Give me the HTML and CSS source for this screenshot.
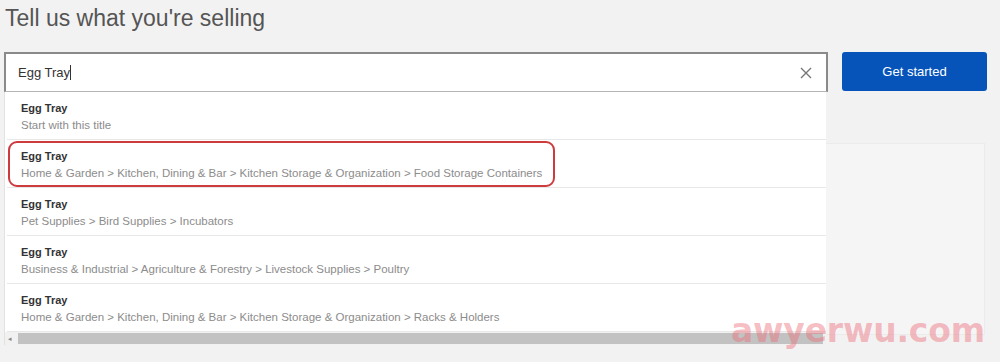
FILE: index.html
```html
<!DOCTYPE html>
<html lang="en">
<head>
  <meta charset="UTF-8" />
  <title>Tell us what you're selling</title>
  <link rel="stylesheet" href="styles.css">
</head>
<body>

  <div class="page">
    <h1>Tell us what you're selling</h1>

    <div class="sell-row">
      <div class="search-col">
        <div class="search-box">
          <span class="search-text">Egg Tray</span><span class="caret"></span>
          <svg class="clear-icon" width="12" height="12" viewBox="0 0 12 12">
            <path d="M1 1 L11 11 M11 1 L1 11" stroke="#777" stroke-width="1.4" fill="none" />
          </svg>
        </div>

        <!-- suggestions menu -->
        <div class="suggestions">
          <div class="suggestion">
            <div class="s-title">Egg Tray</div>
            <div class="s-path">Start with this title</div>
          </div>
          <div class="suggestion">
            <div class="s-title">Egg Tray</div>
            <div class="s-path">Home &amp; Garden &gt; Kitchen, Dining &amp; Bar &gt; Kitchen Storage &amp; Organization &gt; Food Storage Containers</div>
            <div class="highlight"></div>
          </div>
          <div class="suggestion">
            <div class="s-title">Egg Tray</div>
            <div class="s-path">Pet Supplies &gt; Bird Supplies &gt; Incubators</div>
          </div>
          <div class="suggestion">
            <div class="s-title">Egg Tray</div>
            <div class="s-path">Business &amp; Industrial &gt; Agriculture &amp; Forestry &gt; Livestock Supplies &gt; Poultry</div>
          </div>
          <div class="suggestion">
            <div class="s-title">Egg Tray</div>
            <div class="s-path">Home &amp; Garden &gt; Kitchen, Dining &amp; Bar &gt; Kitchen Storage &amp; Organization &gt; Racks &amp; Holders</div>
          </div>
          <div class="scrollbar">
            <span class="arrow">&#9666;</span>
            <div class="thumb"></div>
          </div>
        </div>
      </div>

      <div class="side-col">
        <button class="start-btn">Get started</button>
      </div>
    </div>

    <div class="info-card"></div>
  </div>

  <div class="watermark">awyerwu.com</div>

</body>
</html>
```

FILE: styles.css
```css
* {
  box-sizing: border-box;
  margin: 0;
  padding: 0;
}

body {
  font-family: 'Liberation Sans', Arial, sans-serif;
  background: #f2f2f2;
  width: 1000px;
  height: 362px;
  overflow: hidden;
  position: relative;
}

.page {
  padding: 4px 13px 0 4px;
}

h1 {
  font-size: 23px;
  font-weight: normal;
  line-height: 28px;
  color: #555;
  margin-left: 1px;
}

.sell-row {
  display: flex;
  gap: 14px;
  margin-top: 20px;
}

.search-col {
  width: 824px;
  position: relative;
  z-index: 2;
}

.search-box {
  height: 40px;
  background: #fff;
  border: 2px solid #8a8a8a;
  border-bottom: 1px solid #b5b5b5;
  display: flex;
  align-items: center;
  padding-left: 12px;
  padding-right: 14px;
}

.search-text {
  font-size: 13px;
  color: #333;
}

.caret {
  width: 1px;
  height: 15px;
  background: #333;
}

.clear-icon {
  margin-left: auto;
}

.suggestions {
  position: absolute;
  top: 40px;
  left: 0;
  width: 822px;
  background: #fff;
  border-left: 1px solid #e2e2e2;
}

.suggestion {
  position: relative;
  height: 48px;
  padding: 8px 0 0 14px;
  border-bottom: 1px solid #e8e8e8;
  margin-left: 2px;
}

.suggestion:last-of-type {
  border-bottom: none;
  height: 46px;
}

.s-title {
  font-size: 11px;
  font-weight: bold;
  color: #333;
  line-height: 17px;
}

.s-path {
  font-size: 11.5px;
  color: #8c8c8c;
  line-height: 17px;
}

.highlight {
  position: absolute;
  left: 1px;
  top: 1px;
  width: 547px;
  height: 46px;
  border: 2px solid #cf3a3f;
  border-radius: 9px;
}

.scrollbar {
  height: 13px;
  background: #f1f1f1;
  display: flex;
  align-items: center;
  padding-left: 3px;
}

.arrow {
  font-size: 7px;
  color: #888;
  width: 10px;
}

.thumb {
  height: 11px;
  width: 805px;
  background: #c2c2c2;
}

.side-col {
  width: 145px;
}

.start-btn {
  width: 145px;
  height: 39px;
  background: #0654ba;
  color: #fff;
  border: none;
  border-radius: 3px;
  font-family: 'Liberation Sans', Arial, sans-serif;
  font-size: 13px;
}

.info-card {
  margin-top: 51px;
  margin-left: 40px;
  width: 941px;
  height: 192px;
  background: #f5f5f5;
  border: 1px solid #ebebeb;
}

.watermark {
  position: absolute;
  left: 731px;
  top: 311px;
  font-family: 'DejaVu Sans', sans-serif;
  font-weight: bold;
  font-size: 33px;
  letter-spacing: -0.2px;
  color: rgba(236, 110, 122, 0.45);
  z-index: 3;
}
```
